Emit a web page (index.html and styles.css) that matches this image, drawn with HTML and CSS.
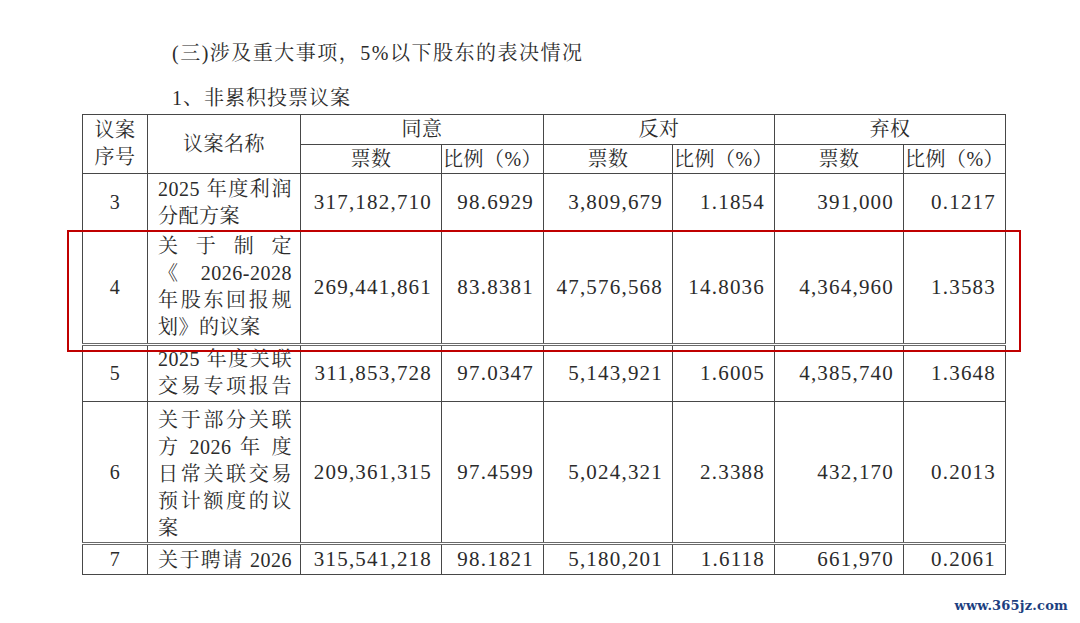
FILE: index.html
```html
<!DOCTYPE html>
<html>
<head>
    <meta charset="utf-8">
    <title>表决情况</title>
    <link rel="stylesheet" href="styles.css">
</head>
<body>

    <div class="page">
        <p class="heading">(三)涉及重大事项，5%以下股东的表决情况</p>
        <p class="heading sub">1、非累积投票议案</p>

        <table class="votes">
            <colgroup>
                <col class="c-no">
                <col class="c-name">
                <col class="c-num">
                <col class="c-pct">
                <col class="c-num2">
                <col class="c-pct">
                <col class="c-num2">
                <col class="c-pct">
            </colgroup>
            <thead>
                <tr class="h-top">
                    <th rowspan="2">议案<br>序号</th>
                    <th rowspan="2">议案名称</th>
                    <th colspan="2">同意</th>
                    <th colspan="2">反对</th>
                    <th colspan="2">弃权</th>
                </tr>
                <tr class="h-sub">
                    <th>票数</th>
                    <th>比例（%）</th>
                    <th>票数</th>
                    <th>比例（%）</th>
                    <th>票数</th>
                    <th>比例（%）</th>
                </tr>
            </thead>
            <tbody>
                <tr class="r2">
                    <td class="no">3</td>
                    <td class="name">
                        <span class="ln j">2025 年度利润</span>
                        <span class="ln">分配方案</span>
                    </td>
                    <td class="num">317,182,710</td>
                    <td class="num">98.6929</td>
                    <td class="num">3,809,679</td>
                    <td class="num">1.1854</td>
                    <td class="num">391,000</td>
                    <td class="num">0.1217</td>
                </tr>
                <tr class="r4">
                    <td class="no">4</td>
                    <td class="name">
                        <span class="ln j">关于制定</span>
                        <span class="ln j">《 2026-2028</span>
                        <span class="ln j">年股东回报规</span>
                        <span class="ln">划》的议案</span>
                    </td>
                    <td class="num">269,441,861</td>
                    <td class="num">83.8381</td>
                    <td class="num">47,576,568</td>
                    <td class="num">14.8036</td>
                    <td class="num">4,364,960</td>
                    <td class="num">1.3583</td>
                </tr>
                <tr class="r2 split">
                    <td class="no">5</td>
                    <td class="name tight">
                        <span class="ln j">2025 年度关联</span>
                        <span class="ln j">交易专项报告</span>
                    </td>
                    <td class="num">311,853,728</td>
                    <td class="num">97.0347</td>
                    <td class="num">5,143,921</td>
                    <td class="num">1.6005</td>
                    <td class="num">4,385,740</td>
                    <td class="num">1.3648</td>
                </tr>
                <tr class="r5">
                    <td class="no">6</td>
                    <td class="name loose">
                        <span class="ln j">关于部分关联</span>
                        <span class="ln j">方 2026 年 度</span>
                        <span class="ln j">日常关联交易</span>
                        <span class="ln j">预计额度的议</span>
                        <span class="ln">案</span>
                    </td>
                    <td class="num">209,361,315</td>
                    <td class="num">97.4599</td>
                    <td class="num">5,024,321</td>
                    <td class="num">2.3388</td>
                    <td class="num">432,170</td>
                    <td class="num">0.2013</td>
                </tr>
                <tr class="r1 split">
                    <td class="no">7</td>
                    <td class="name">
                        <span class="ln j">关于聘请 2026</span>
                    </td>
                    <td class="num">315,541,218</td>
                    <td class="num">98.1821</td>
                    <td class="num">5,180,201</td>
                    <td class="num">1.6118</td>
                    <td class="num">661,970</td>
                    <td class="num">0.2061</td>
                </tr>
            </tbody>
        </table>

        <!-- red marker around proposal 4 -->
        <div class="highlight"></div>

        <div class="watermark">www.365jz.com</div>
    </div>

</body>
</html>
```

FILE: styles.css
```css
body {
    margin: 0;
    background: #ffffff;
    color: #2b2b2b;
    font-family: "Liberation Serif", "Noto Serif CJK SC", "Noto Sans CJK SC", serif;
}
.page {
    position: relative;
    width: 1080px;
    height: 623px;
    padding: 40px 0 0 82px;
    box-sizing: border-box;
    overflow: hidden;
}
.heading {
    margin: 0;
    padding-left: 90px;
    font-size: 20px;
    line-height: 27px;
    letter-spacing: 1.5px;
}
.heading.sub {
    margin-top: 18px;
    letter-spacing: 1px;
}
.votes {
    margin-top: 2px;
    width: 924px;
    table-layout: fixed;
    border-collapse: collapse;
    font-size: 20px;
    line-height: 27px;
}
.c-no { width: 65px; }
.c-name { width: 153px; }
.c-num { width: 141px; }
.c-num2 { width: 129px; }
.c-pct { width: 102px; }
.votes th,
.votes td {
    border: 1px solid #474747;
    padding: 0;
    font-weight: normal;
    letter-spacing: 0.5px;
}
.votes th {
    text-align: center;
    vertical-align: middle;
}
.h-top { height: 30px; }
.h-sub { height: 29px; }
.r1 { height: 29px; }
.r2 { height: 57px; }
.r4 { height: 114px; }
.r5 { height: 142px; }
.split td {
    border-top: 3px double #6a6a6a;
}
.no {
    text-align: center;
    vertical-align: middle;
}
.name {
    padding: 2px 8px 0 10px !important;
    vertical-align: top;
}
.name.tight {
    padding-top: 0 !important;
}
.name.loose {
    padding-top: 5px !important;
}
.ln {
    display: block;
    text-align: left;
}
.ln.j {
    text-align: justify;
    text-align-last: justify;
}
.num {
    text-align: right;
    vertical-align: middle;
    padding-right: 9px !important;
    font-size: 21px;
    letter-spacing: 1.2px !important;
}
.highlight {
    position: absolute;
    left: 67px;
    top: 230px;
    width: 954px;
    height: 122px;
    box-sizing: border-box;
    border: 2px solid #c00000;
}
.watermark {
    position: absolute;
    right: 12px;
    bottom: 10px;
    font-family: "DejaVu Serif", serif;
    font-weight: bold;
    font-size: 13px;
    color: #1d3f80;
    letter-spacing: 0.2px;
}
```
